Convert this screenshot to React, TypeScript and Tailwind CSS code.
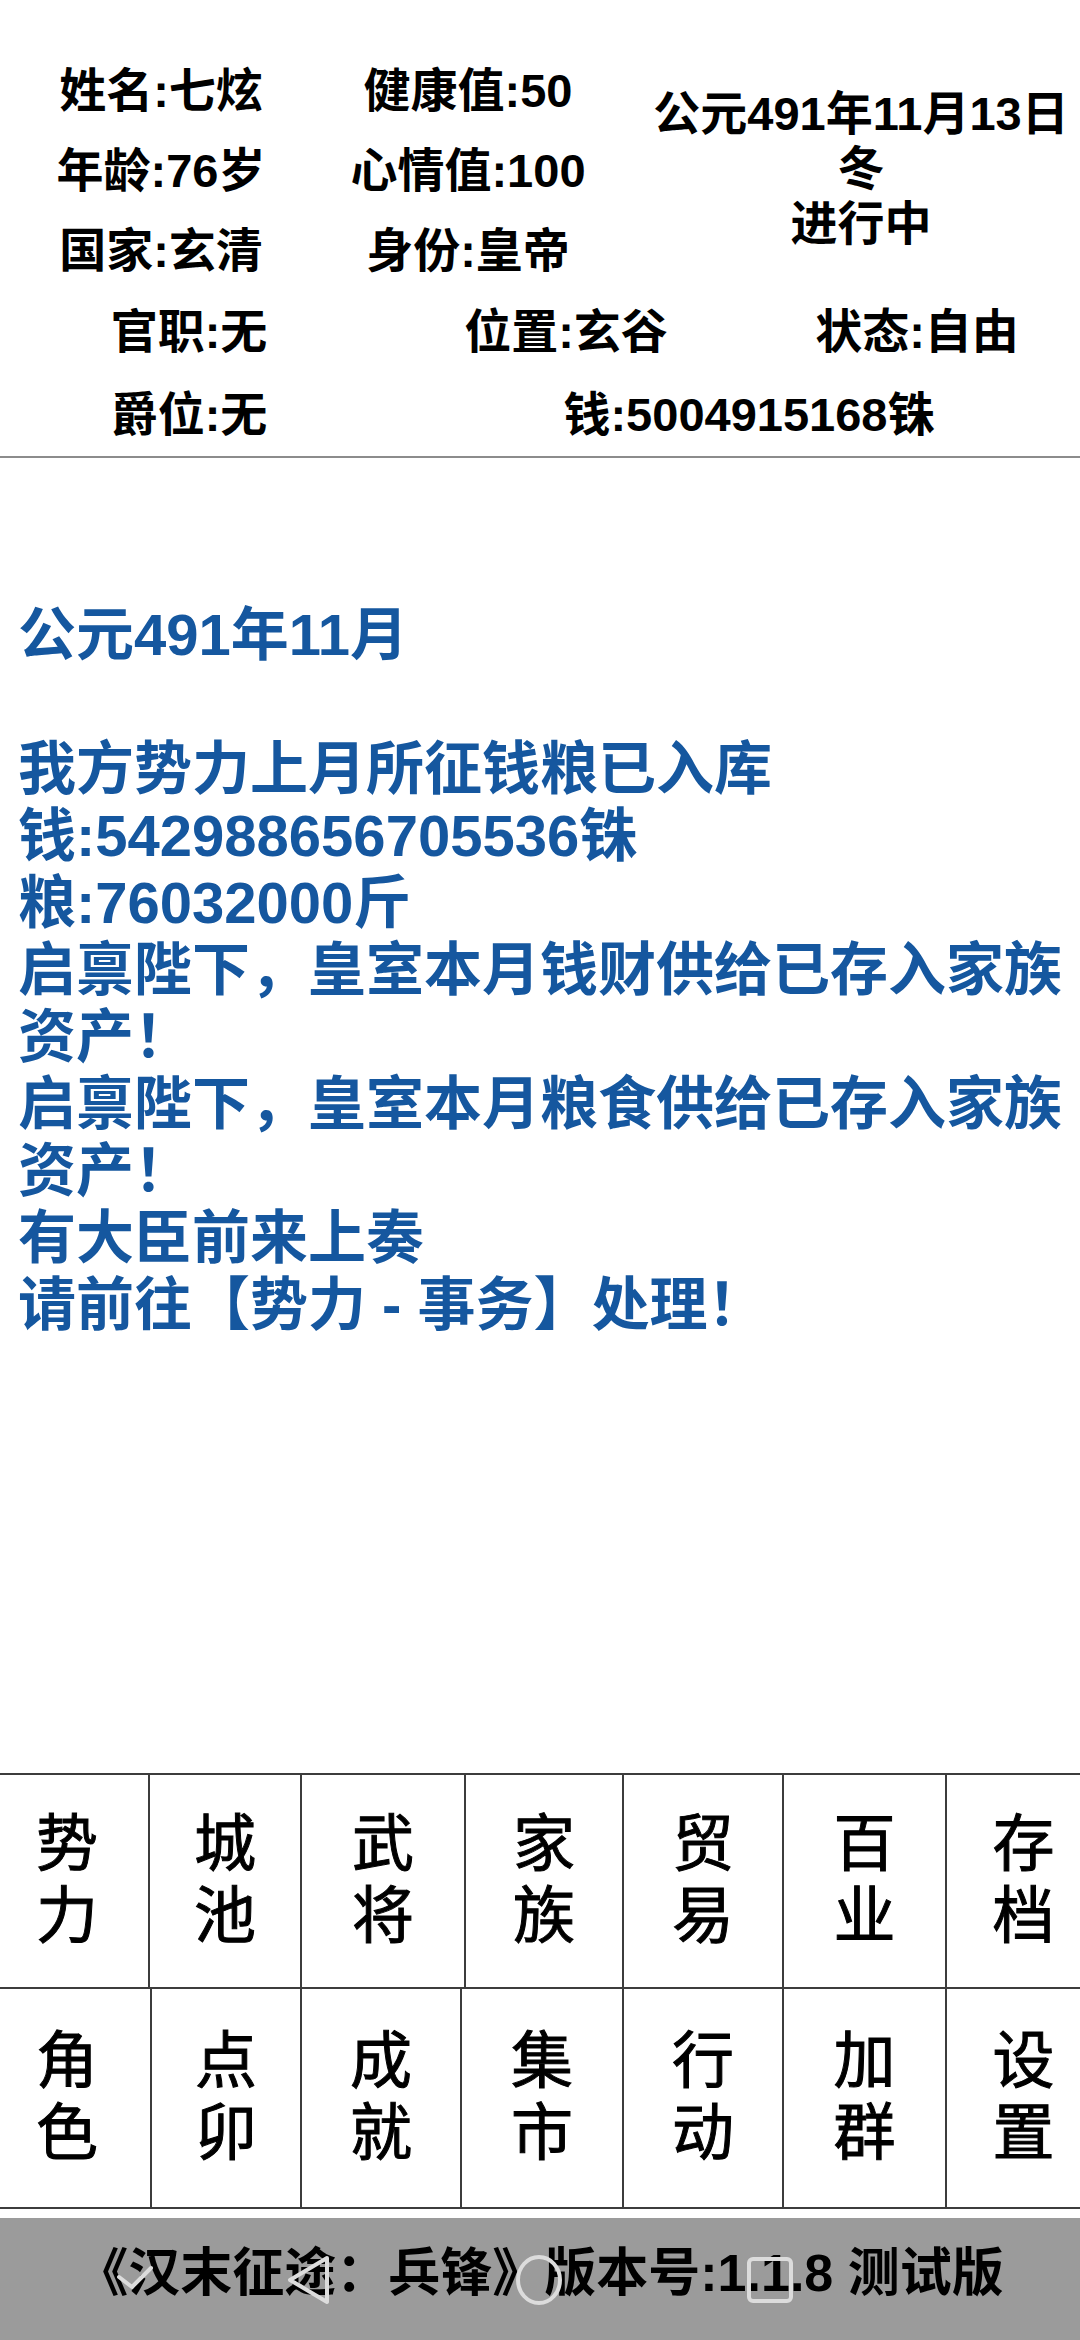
const topLeft = [
  ["姓名:七炫", "健康值:50"],
  ["年龄:76岁", "心情值:100"],
  ["国家:玄清", "身份:皇帝"],
];

const messages = [
  "公元491年11月",
  "",
  "我方势力上月所征钱粮已入库",
  "钱:542988656705536铢",
  "粮:76032000斤",
  "启禀陛下，皇室本月钱财供给已存入家族",
  "资产！",
  "启禀陛下，皇室本月粮食供给已存入家族",
  "资产！",
  "有大臣前来上奏",
  "请前往【势力 - 事务】处理！",
];

const menuRows = [
  {
    widths: ["w-[150px] pr-[14px]", "w-[152px]", "w-[164px]", "w-[158px]", "w-[160px]", "w-[163px]"],
    items: ["势力", "城池", "武将", "家族", "贸易", "百业", "存档"],
    height: "h-[214px]",
  },
  {
    widths: ["w-[152px] pr-[16px]", "w-[150px]", "w-[160px]", "w-[162px]", "w-[160px]", "w-[163px]"],
    items: ["角色", "点卯", "成就", "集市", "行动", "加群", "设置"],
    height: "h-[218px]",
  },
];

const NavOverlay = () => (
  <svg
    className="absolute inset-0 pointer-events-none"
    width="1080"
    height="122"
    viewBox="0 0 1080 122"
    fill="none"
    stroke="#dcdcdc"
    strokeWidth="4"
    strokeLinecap="round"
    strokeLinejoin="round"
  >
    {/* check */}
    <path d="M119 59 L132 69 L151 50" />
    {/* back */}
    <path d="M327 40 L290 62 L327 84 Z" />
    {/* home */}
    <ellipse cx="539" cy="62" rx="21" ry="23" />
    {/* recents */}
    <rect x="749" y="41" width="42" height="42" rx="4" />
  </svg>
);

export default function App() {
  return (
    <div className="w-[1080px] h-[2340px] bg-white flex flex-col font-['Liberation_Sans','Noto_Sans_CJK_SC',sans-serif] text-black">
      {/* status header */}
      <div className="pt-[50px] font-bold text-[47px]">
        <div className="flex h-[240px]">
          <div className="grid grid-cols-[322px_292px] auto-rows-[80px]">
            {topLeft.map((row) =>
              row.map((cell) => (
                <div key={cell} className="flex items-center justify-center whitespace-nowrap leading-none">
                  {cell}
                </div>
              ))
            )}
          </div>
          <div className="flex-1 flex flex-col items-center justify-center pl-[28px] pb-[4px] leading-[55px] whitespace-nowrap">
            <div>公元491年11月13日</div>
            <div>冬</div>
            <div>进行中</div>
          </div>
        </div>
        <div className="grid grid-cols-[378px_376px_326px] h-[83px] items-center leading-none whitespace-nowrap">
          <div className="text-center">官职:无</div>
          <div className="text-center">位置:玄谷</div>
          <div className="text-center">状态:自由</div>
        </div>
        <div className="grid grid-cols-[378px_1fr] h-[83px] items-center leading-none whitespace-nowrap">
          <div className="text-center">爵位:无</div>
          <div className="text-center pl-[40px]">钱:5004915168铢</div>
        </div>
      </div>
      <div className="h-[2px] bg-[#8c8c8c]" />

      {/* message log */}
      <div className="flex-1 pt-[143px] px-[18px] text-[58px] leading-[67px] font-semibold text-[#15579f]">
        {messages.map((line, i) => (
          <div key={i} className="h-[67px] whitespace-nowrap">
            {line}
          </div>
        ))}
      </div>

      {/* menu grid */}
      <div className="border-t-2 border-b-2 border-[#3c3c3c] text-[62px] leading-[72px] [-webkit-text-stroke:1px_#000]">
        {menuRows.map((row, r) => (
          <div key={r} className={`flex ${row.height} ${r === 0 ? "border-b-2 border-[#3c3c3c]" : ""}`}>
            {row.items.map((label, i) => (
              <div
                key={label}
                className={`${i < 6 ? row.widths[i] + " border-r-2 border-[#3c3c3c]" : "flex-1 pl-[20px]"} flex flex-col items-center justify-center`}
              >
                <span>{label[0]}</span>
                <span>{label[1]}</span>
              </div>
            ))}
          </div>
        ))}
      </div>

      {/* footer */}
      <div className="mt-[9px] h-[122px] bg-[#9b9b9b] relative flex items-center justify-center pb-[12px]">
        <span className="text-[52px] font-bold whitespace-nowrap">《汉末征途：兵锋》版本号:1.1.8 测试版</span>
        <NavOverlay />
      </div>
    </div>
  );
}
